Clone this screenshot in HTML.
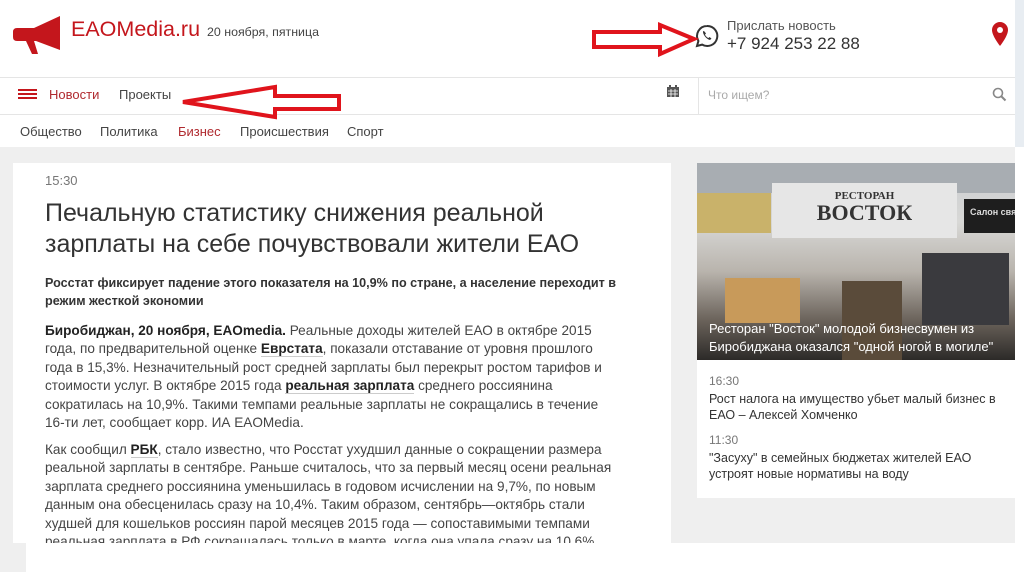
<!DOCTYPE html>
<html><head><meta charset="utf-8"><style>
*{margin:0;padding:0;box-sizing:border-box}
body{width:1024px;height:572px;overflow:hidden;background:#fff;font-family:"Liberation Sans",sans-serif;color:#333;position:relative}
.a{position:absolute;white-space:nowrap}
.gray{position:absolute;left:0;top:147px;width:1015px;height:396px;background:#efefef}
.card{position:absolute;left:13px;top:163px;width:658px;height:380px;background:#fff;overflow:hidden}
.p{position:absolute;left:32px;font-size:13.6px;line-height:18.4px;color:#444;white-space:nowrap}
.p b{color:#222}
.u{border-bottom:1px solid #ccc;font-weight:bold;color:#222}
</style></head><body>
<svg class="a" style="left:12px;top:14px" width="50" height="42" viewBox="0 0 50 42">
<path d="M1 18 Q1 14 5 14 L22 14 L48 2 L48 36 L24 27 L22 27 L26 40 L20 40 L14 27 L5 27 Q1 27 1 23 Z" fill="#c4161c"/>
</svg>
<div class="a" style="left:71px;top:17px;font-size:21.5px;color:#c4161c">EAOMedia.ru</div>
<div class="a" style="left:207px;top:25px;font-size:12.4px;color:#444">20 ноября, пятница</div>
<svg class="a" style="left:695px;top:24px" width="24" height="24" viewBox="0 0 24 24"><path d="M12 2a10 10 0 0 0-8.6 15L2 22l5.2-1.4A10 10 0 1 0 12 2z" fill="none" stroke="#333" stroke-width="2"/><path d="M8 7c-.5 3 3 8 7 9l1.5-1.5-2-1.5-1 1c-1.5-.5-3-2-3.5-3.5l1-1-1.5-2z" fill="#333"/></svg>
<div class="a" style="left:727px;top:18px;font-size:13px;color:#555">Прислать новость</div>
<div class="a" style="left:727px;top:34px;font-size:17px;color:#333">+7 924 253 22 88</div>
<svg class="a" style="left:991px;top:22px" width="18" height="24" viewBox="0 0 18 24"><path d="M9 0a8 8 0 0 0-8 8c0 6 8 16 8 16s8-10 8-16a8 8 0 0 0-8-8z" fill="#c4161c"/><circle cx="9" cy="8" r="3" fill="#fff"/></svg>
<div class="a" style="left:1015px;top:0;width:9px;height:147px;background:#e8edf2"></div>
<svg class="a" style="left:590px;top:22px" width="110" height="36"><polygon points="4,10 70,10 70,3 104,17 70,32 70,25 4,25" fill="none" stroke="#e0141c" stroke-width="4"/></svg>
<div class="a" style="left:0;top:77px;width:1015px;height:1px;background:#e5e5e5"></div>
<div class="a" style="left:0;top:114px;width:1015px;height:1px;background:#e5e5e5"></div>
<div class="a" style="left:698px;top:77px;width:1px;height:37px;background:#e5e5e5"></div>
<div class="a" style="left:18px;top:89px;width:19px;height:2px;background:#c4161c;box-shadow:0 4px 0 #c4161c,0 8px 0 #c4161c"></div>
<div class="a" style="left:49px;top:87px;font-size:13px;color:#b02a2f">Новости</div>
<div class="a" style="left:119px;top:87px;font-size:13px;color:#444">Проекты</div>
<svg class="a" style="left:175px;top:84px" width="170" height="36"><polygon points="8,18 100,3 100,12 164,12 164,25 100,25 100,33" fill="none" stroke="#e0141c" stroke-width="4"/></svg>
<svg class="a" style="left:667px;top:85px" width="12" height="12"><rect x="0" y="2" width="12" height="10" fill="#555"/><rect x="2" y="0" width="2" height="3" fill="#555"/><rect x="8" y="0" width="2" height="3" fill="#555"/><path d="M1 6h10M1 9h10M4 4v8M8 4v8" stroke="#fff" stroke-width=".8"/></svg>
<div class="a" style="left:708px;top:88px;font-size:12px;color:#aaa">Что ищем?</div>
<svg class="a" style="left:992px;top:87px" width="15" height="15"><circle cx="6" cy="6" r="4.5" fill="none" stroke="#888" stroke-width="1.6"/><path d="M9.5 9.5l4 4" stroke="#888" stroke-width="2"/></svg>
<div class="a" style="left:20px;top:124px;font-size:13px;color:#444">Общество</div>
<div class="a" style="left:100px;top:124px;font-size:13px;color:#444">Политика</div>
<div class="a" style="left:178px;top:124px;font-size:13px;color:#b02a2f">Бизнес</div>
<div class="a" style="left:240px;top:124px;font-size:13px;color:#444">Происшествия</div>
<div class="a" style="left:347px;top:124px;font-size:13px;color:#444">Спорт</div>
<div class="gray"></div>
<div class="a" style="left:0;top:543px;width:26px;height:29px;background:#efefef"></div>
<div class="card">
<div class="a" style="left:32px;top:10px;font-size:13px;color:#777">15:30</div>
<div class="a" style="left:32px;top:35px;font-size:25px;line-height:31px;color:#333">Печальную статистику снижения реальной<br>зарплаты на себе почувствовали жители ЕАО</div>
<div class="p" style="top:111px;font-weight:bold;font-size:12.6px;color:#333">Росстат фиксирует падение этого показателя на 10,9% по стране, а население переходит в<br>режим жесткой экономии</div>
<div class="p" style="top:159px"><b>Биробиджан, 20 ноября, EAOmedia.</b> Реальные доходы жителей ЕАО в октябре 2015<br>года, по предварительной оценке <span class="u">Еврстата</span>, показали отставание от уровня прошлого<br>года в 15,3%. Незначительный рост средней зарплаты был перекрыт ростом тарифов и<br>стоимости услуг. В октябре 2015 года <span class="u">реальная зарплата</span> среднего россиянина<br>сократилась на 10,9%. Такими темпами реальные зарплаты не сокращались в течение<br>16-ти лет, сообщает корр. ИА EAOMedia.</div>
<div class="p" style="top:278px">Как сообщил <span class="u">РБК</span>, стало известно, что Росстат ухудшил данные о сокращении размера<br>реальной зарплаты в сентябре. Раньше считалось, что за первый месяц осени реальная<br>зарплата среднего россиянина уменьшилась в годовом исчислении на 9,7%, по новым<br>данным она обесценилась сразу на 10,4%. Таким образом, сентябрь—октябрь стали<br>худшей для кошельков россиян парой месяцев 2015 года — сопоставимыми темпами<br>реальная зарплата в РФ сокращалась только в марте, когда она упала сразу на 10,6%</div>
</div>
<div class="a" style="left:697px;top:163px;width:318px;height:335px;background:#fff"></div>
<div class="a" style="left:697px;top:163px;width:318px;height:197px;overflow:hidden;background:linear-gradient(#c9ccd0 0,#d8d8d6 30%,#b9b4ad 55%,#6a625a 80%,#2c2a28 100%)">
<div class="a" style="left:0;top:0;width:318px;height:30px;background:#a8adb2"></div>
<div class="a" style="left:0;top:30px;width:74px;height:40px;background:#c9b26a"></div>
<div class="a" style="left:75px;top:20px;width:185px;height:55px;background:#e6e6e6;text-align:center;font-family:'Liberation Serif',serif;color:#333"><div style="font-size:11px;font-weight:bold;margin-top:7px">РЕСТОРАН</div><div style="font-size:22px;font-weight:bold;line-height:22px">ВОСТОК</div></div>
<div class="a" style="left:267px;top:36px;width:60px;height:34px;background:#1e1e1e;color:#ddd;font-size:9px;padding:8px 6px;font-weight:bold">Салон связи</div>
<div class="a" style="left:225px;top:90px;width:87px;height:72px;background:#3a3a3e"></div>
<div class="a" style="left:28px;top:115px;width:75px;height:45px;background:#c89a5a"></div>
<div class="a" style="left:145px;top:118px;width:60px;height:79px;background:#5a4b3a"></div>
<div class="a" style="left:12px;top:157px;font-size:13px;line-height:18px;color:#fff">Ресторан "Восток" молодой бизнесвумен из<br>Биробиджана оказался "одной ногой в могиле"</div>
</div>
<div class="a" style="left:709px;top:374px;font-size:12px;color:#777">16:30</div>
<div class="a" style="left:709px;top:391px;font-size:12.5px;line-height:16px;color:#333">Рост налога на имущество убьет малый бизнес в<br>ЕАО – Алексей Хомченко</div>
<div class="a" style="left:709px;top:433px;font-size:12px;color:#777">11:30</div>
<div class="a" style="left:709px;top:450px;font-size:12.5px;line-height:16px;color:#333">"Засуху" в семейных бюджетах жителей ЕАО<br>устроят новые нормативы на воду</div>
</body></html>
